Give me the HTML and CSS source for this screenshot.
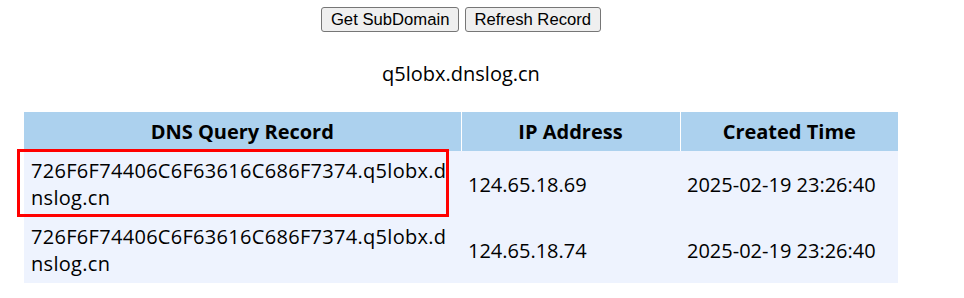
FILE: index.html
```html
<!DOCTYPE html>
<html>
<head>
<meta charset="utf-8">
<link rel="stylesheet" href="styles.css">
</head>
<body>
<div class="page">
  <div class="toolbar">
    <button class="btn">Get SubDomain</button>
    <button class="btn">Refresh Record</button>
  </div>
  <p class="domain">q5lobx.dnslog.cn</p>
  <table class="records">
    <colgroup>
      <col class="col-query">
      <col class="col-ip">
      <col class="col-time">
    </colgroup>
    <thead>
      <tr>
        <th>DNS Query Record</th>
        <th>IP Address</th>
        <th>Created Time</th>
      </tr>
    </thead>
    <tbody>
      <tr>
        <td class="highlighted"><div class="query">726F6F74406C6F63616C686F7374.q5lobx.dnslog.cn</div><span class="mark"></span></td>
        <td>124.65.18.69</td>
        <td>2025-02-19 23:26:40</td>
      </tr>
      <tr>
        <td><div class="query">726F6F74406C6F63616C686F7374.q5lobx.dnslog.cn</div></td>
        <td>124.65.18.74</td>
        <td>2025-02-19 23:26:40</td>
      </tr>
    </tbody>
  </table>
</div>
</body>
</html>
```

FILE: styles.css
```css
html, body {
  margin: 0;
  padding: 0;
  background: #ffffff;
}

body {
  padding: 0 8px;
  font-family: "Open Sans", "Noto Sans", sans-serif;
  color: #000000;
}

.page {
  width: 906px;
  text-align: center;
}

.toolbar {
  padding-top: 7px;
  display: flex;
  justify-content: center;
  gap: 6px;
}

.btn {
  height: 25px;
  padding: 0 8.5px;
  margin: 0;
  font-family: "Liberation Sans", Arial, sans-serif;
  font-size: 16.67px;
  line-height: 23px;
  color: #000000;
  background: #efefef;
  border: 1px solid #767676;
  border-radius: 3px;
}

.domain {
  margin: 28px 0 0 0;
  font-size: 20px;
  line-height: 27px;
}

.records {
  margin: 25px auto 0 auto;
  width: 874px;
  border-collapse: collapse;
  table-layout: fixed;
  font-size: 20px;
  line-height: 27px;
}

.col-query { width: 437px; }
.col-ip { width: 219px; }
.col-time { width: 218px; }

.records th {
  background: #acd1ee;
  font-weight: 700;
  padding: 6px 7px;
  text-align: center;
  border-right: 1px solid #ffffff;
}

.records th:last-child {
  border-right: none;
}

.records td {
  background: #eef3fe;
  padding: 6px 7px;
  text-align: left;
  vertical-align: middle;
}

.query {
  max-width: 421px;
  letter-spacing: 0.3px;
  word-break: break-all;
}

.highlighted {
  position: relative;
}

.mark {
  position: absolute;
  left: -7px;
  top: -2px;
  width: 426px;
  height: 62px;
  border: 3px solid #ff0000;
  pointer-events: none;
}
```
